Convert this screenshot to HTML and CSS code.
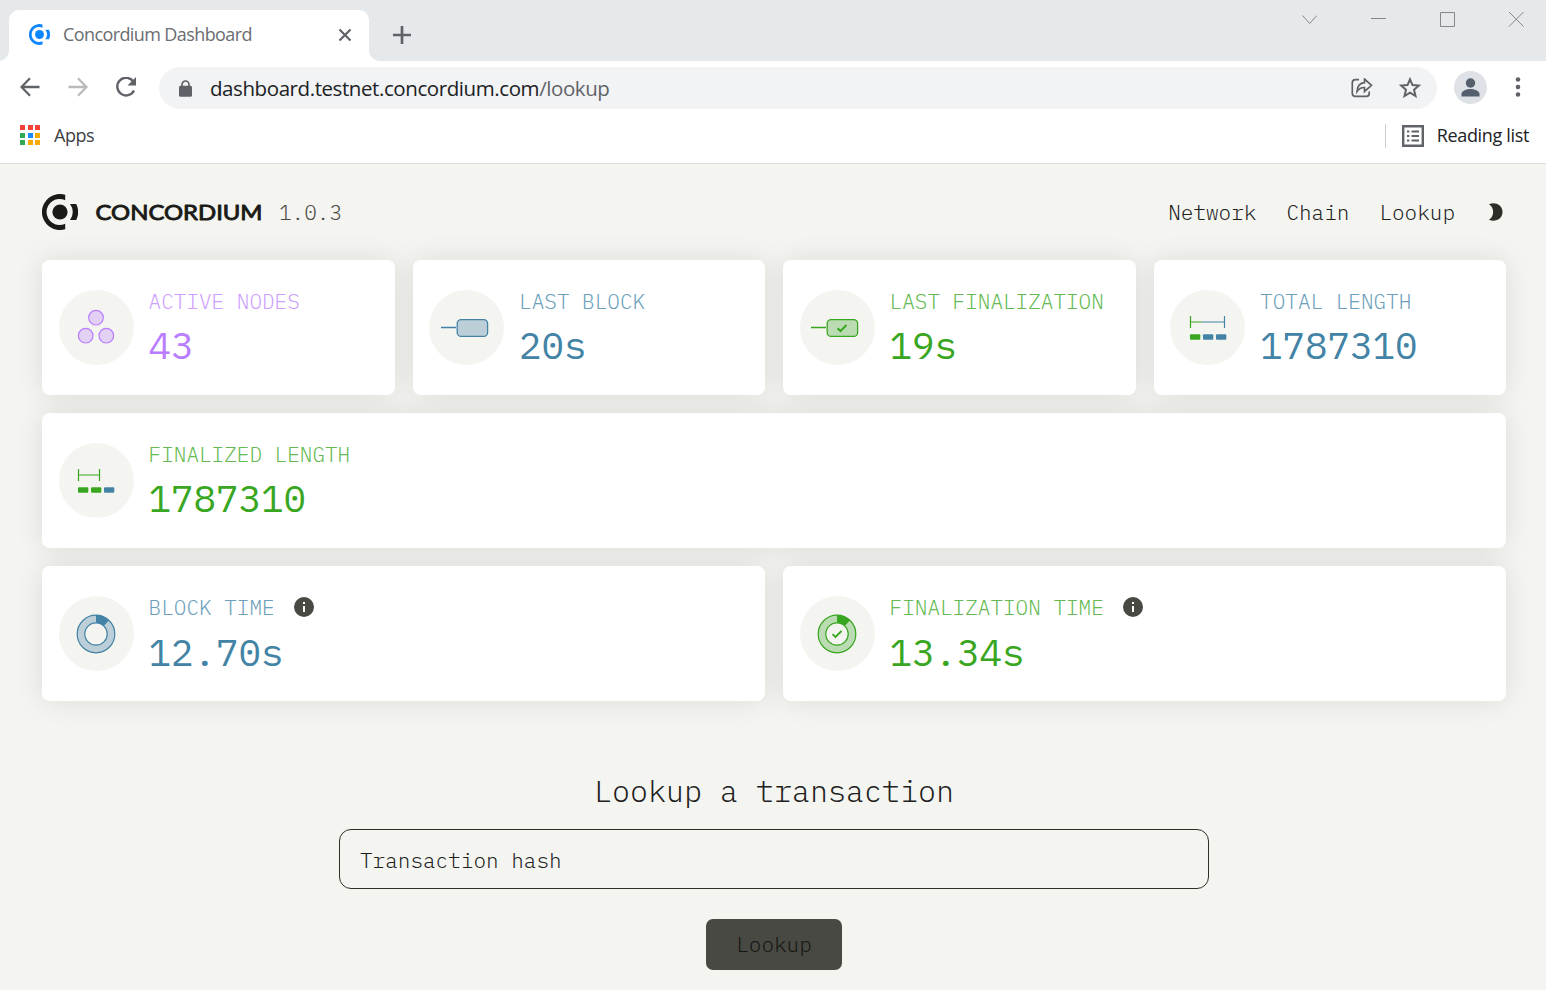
FILE: index.html
```html
<!DOCTYPE html>
<html lang="en">
<head>
<meta charset="utf-8">
<title>Concordium Dashboard</title>
<link rel="stylesheet" href="styles.css">
</head>
<body>
<svg class="defs" width="0" height="0">
  <symbol id="brand" viewBox="0 0 36 36">
    <path d="M23.200 .8A18 18 0 1 0 23.200 35.200V29.700A13 13 0 1 1 23.200 6.300Z" fill="currentColor"/>
    <circle cx="18" cy="18" r="7.600" fill="currentColor"/>
    <path d="M28 10H34.200A18 18 0 0 1 34.200 26H28A13 13 0 0 0 28 10Z" fill="currentColor"/>
  </symbol>
  <symbol id="info" viewBox="0 0 20 20">
    <circle cx="10" cy="10" r="10" fill="#494944"/>
    <path d="M9 5h2v2H9zM9 9h2v6H9z" fill="#fff"/>
  </symbol>
</svg>
<div class="tabs">
  <div class="tab">
    <svg class="favicon" width="21" height="21"><use href="#brand"/></svg>
    <span class="tab-title">Concordium Dashboard</span>
    <svg class="tab-close" width="14" height="14" viewBox="0 0 14 14"><path d="M1.500 1.500l11 11M12.500 1.500l-11 11" stroke="#5f6368" stroke-width="2.200"/></svg>
  </div>
  <svg class="tab-new" width="18" height="18" viewBox="0 0 18 18"><path d="M9 0v18M0 9h18" stroke="#5f6368" stroke-width="2.700"/></svg>
  <div class="window-controls">
    <svg width="16" height="16" viewBox="0 0 16 16"><path d="M1.500 4.500l7.200 8 7.200-8"/></svg>
    <svg width="16" height="16" viewBox="0 0 16 16"><path d="M1 7.500h15"/></svg>
    <svg width="16" height="16" viewBox="0 0 16 16"><path d="M1.500 1.500h14v14h-14z"/></svg>
    <svg width="16" height="16" viewBox="0 0 16 16"><path d="M1 1l14.500 14.500M15.500 1L1 15.500"/></svg>
  </div>
</div>
<div class="toolbar">
  <svg class="tool" width="20" height="20" viewBox="0 0 20 20"><path d="M19.500 10H1.800M10 1.200L1.500 10l8.500 8.800" stroke="#5f6368"/></svg>
  <svg class="tool" width="20" height="20" viewBox="0 0 20 20"><path d="M.5 10h17.700M10 1.200l8.500 8.800-8.500 8.800" stroke="#b8babc"/></svg>
  <svg class="tool reload" width="22" height="20" viewBox="0 0 22 20"><path d="M18.600 5A8.800 8.800 0 1 0 19 13.500" stroke="#5f6368" stroke-width="2.400"/><path d="M21 0v8.500h-8.500z" fill="#5f6368"/></svg>
  <div class="address">
    <svg class="lock" width="13" height="17" viewBox="0 0 13 17"><path d="M3 6V4.500a3.500 3.500 0 0 1 7 0V6" fill="none" stroke="#5f6368" stroke-width="1.700"/><rect y="5.800" width="13" height="11" rx="1.500" fill="#5f6368"/></svg>
    <span class="url">dashboard.testnet.concordium.com<span class="path">/lookup</span></span>
    <svg class="share" width="22" height="20" viewBox="0 0 22 20"><path d="M8 1.600H4.500A3.200 3.200 0 0 0 1.300 4.800v10.400a3.200 3.200 0 0 0 3.200 3.200h10.700a3 3 0 0 0 3-3v-2M6 13.500C6.300 8 9 5 13.500 4.700V1l7 6.300-7 6.200V9.500C10 9.300 8 10.600 6 13.500Z" fill="none" stroke="#5f6368" stroke-width="1.700"/></svg>
    <svg class="star" width="22" height="21" viewBox="0 0 22 21"><path d="M11 2.300l2.500 5.800 6.300.5-4.800 4.200 1.500 6.200-5.500-3.300L5.500 19 7 12.800 2.200 8.600l6.300-.5z" fill="none" stroke="#5f6368" stroke-width="2"/></svg>
  </div>
  <svg class="avatar" width="33" height="33" viewBox="0 0 33 33"><circle cx="16.500" cy="16.500" r="16.500" fill="#dee1e6"/><circle cx="16.500" cy="12" r="4.700" fill="#55606f"/><path d="M7.500 25.500v-2.800c0-3 5.500-4.700 9-4.700s9 1.700 9 4.700v2.800z" fill="#55606f"/></svg>
  <svg class="more" width="6" height="20" viewBox="0 0 6 20"><g fill="#5f6368"><circle cx="3" cy="2.500" r="2.300"/><circle cx="3" cy="10" r="2.300"/><circle cx="3" cy="17.500" r="2.300"/></g></svg>
</div>
<div class="bookmarks">
  <div class="apps-grid"><i class="r"></i><i class="r"></i><i class="r"></i><i class="g"></i><i class="b"></i><i class="y"></i><i class="g"></i><i class="y"></i><i class="y"></i></div>
  <span class="apps">Apps</span>
  <div class="reading">
    <svg width="22" height="22" viewBox="0 0 22 22"><path d="M1.200 1.200h19.600v19.600H1.200z" fill="none" stroke="#5f6368" stroke-width="2.400"/><path d="M5 6.500h2.400M5 11h2.400M5 15.500h2.400M9.500 6.500H17M9.500 11H17M9.500 15.500H17" stroke="#5f6368" stroke-width="2"/></svg>
    <span class="reading-label">Reading list</span>
  </div>
</div>

<main class="page">
  <header class="header">
    <svg class="logo" width="36" height="36"><use href="#brand"/></svg>
    <svg class="wordmark" width="176" height="30" viewBox="0 0 176 30"><text x="4.500" y="22.500" textLength="167" lengthAdjust="spacingAndGlyphs">CONCORDIUM</text></svg>
    <span class="version">1.0.3</span>
    <nav class="nav"><a>Network</a><a>Chain</a><a>Lookup</a>
      <svg width="14" height="18" viewBox="0 0 14 18"><path d="M0 1.200C6-1.500 13.500 2 13.500 9S6 19.500 0 16.800C5.500 13.500 5.500 4.500 0 1.200Z" fill="#2e2e29"/></svg>
    </nav>
  </header>

  <section class="cards">
    <div class="card purple">
      <svg class="icon" viewBox="0 0 75 75"><g fill="#b97dff" fill-opacity=".3" stroke="#b97dff" stroke-width="1.200"><circle cx="37" cy="27.700" r="7.300"/><circle cx="26.700" cy="45.700" r="7.300"/><circle cx="47.300" cy="45.700" r="7.300"/></g></svg>
      <div class="stat"><div class="label">ACTIVE NODES</div><div class="value">43</div></div>
    </div>
    <div class="card blue">
      <svg class="icon" viewBox="0 0 75 75"><path d="M12 37.500h15" stroke="#4383a6" stroke-width="1.300"/><rect x="28.200" y="29.600" width="30.400" height="16.800" rx="4" fill="#bccfd9" stroke="#4383a6" stroke-width="1.300"/></svg>
      <div class="stat"><div class="label">LAST BLOCK</div><div class="value">20s</div></div>
    </div>
    <div class="card green">
      <svg class="icon" viewBox="0 0 75 75"><path d="M11 37.500h15" stroke="#39a621" stroke-width="1.300"/><rect x="27.200" y="29.600" width="30.400" height="16.800" rx="4" fill="#bbdcb2" stroke="#39a621" stroke-width="1.300"/><path d="M37.500 38.200l3 2.800 6-6" fill="none" stroke="#39a621" stroke-width="2"/></svg>
      <div class="stat"><div class="label">LAST FINALIZATION</div><div class="value">19s</div></div>
    </div>
    <div class="card blue">
      <svg class="icon" viewBox="0 0 75 75"><path d="M20.500 26v12M20.500 32H32" stroke="#39a621" stroke-width="1.200"/><path d="M32 32h22M54.500 26v12" stroke="#4383a6" stroke-width="1.200"/><rect x="20" y="44.200" width="10.300" height="5.600" rx="1" fill="#39a621"/><rect x="33" y="44.200" width="10.300" height="5.600" rx="1" fill="#4383a6"/><rect x="46" y="44.200" width="10.300" height="5.600" rx="1" fill="#4383a6"/></svg>
      <div class="stat"><div class="label">TOTAL LENGTH</div><div class="value">1787310</div></div>
    </div>
    <div class="card full green">
      <svg class="icon" viewBox="0 0 75 75"><path d="M19.500 26v12M19.500 32h21M40.500 26v12" stroke="#39a621" stroke-width="1.200"/><rect x="19" y="44.200" width="10.300" height="5.600" rx="1" fill="#39a621"/><rect x="32" y="44.200" width="10.300" height="5.600" rx="1" fill="#39a621"/><rect x="45" y="44.200" width="10.300" height="5.600" rx="1" fill="#4383a6"/></svg>
      <div class="stat"><div class="label">FINALIZED LENGTH</div><div class="value">1787310</div></div>
    </div>
    <div class="card half blue">
      <svg class="icon" viewBox="0 0 75 75"><circle cx="37" cy="38" r="15" fill="none" stroke="#bccfd9" stroke-width="8"/><path d="M37 19a19 19 0 0 1 13 5.200l-5.200 5.800A11.200 11.200 0 0 0 37 26.800z" fill="#4383a6"/><g fill="none" stroke="#4383a6" stroke-width="1.200"><circle cx="37" cy="38" r="18.800"/><circle cx="37" cy="38" r="11.200"/></g></svg>
      <div class="stat"><div class="label">BLOCK TIME<svg class="info" width="20" height="20"><use href="#info"/></svg></div><div class="value">12.70s</div></div>
    </div>
    <div class="card half green">
      <svg class="icon" viewBox="0 0 75 75"><circle cx="37" cy="38" r="15" fill="none" stroke="#bbdcb2" stroke-width="8"/><path d="M37 19a19 19 0 0 1 13 5.200l-5.200 5.800A11.200 11.200 0 0 0 37 26.800z" fill="#39a621"/><g fill="none" stroke="#39a621" stroke-width="1.200"><circle cx="37" cy="38" r="18.800"/><circle cx="37" cy="38" r="11.200"/></g><path d="M32.500 38.200l3 2.800 6-6" fill="none" stroke="#39a621" stroke-width="1.800"/></svg>
      <div class="stat"><div class="label">FINALIZATION TIME<svg class="info" width="20" height="20"><use href="#info"/></svg></div><div class="value">13.34s</div></div>
    </div>
  </section>

  <form class="lookup">
    <h1 class="lookup-title">Lookup a transaction</h1>
    <input class="hash" placeholder="Transaction hash">
    <button class="submit" type="button">Lookup</button>
  </form>
</main>
</body>
</html>
```
FILE: styles.css
```css
* { box-sizing: border-box; }
body {
  margin: 0;
  height: 990px;
  overflow: hidden;
  background: #fff;
  font-family: "Segoe UI", "Open Sans", "Noto Sans", sans-serif;
}
svg { display: block; flex: none; }
.defs { position: absolute; }

.tabs {
  display: flex;
  height: 61px;
  padding: 10px 0 0 9px;
  background: #e6e9ec;
}
.tab {
  position: relative;
  display: flex;
  align-items: center;
  width: 360px;
  height: 51px;
  padding: 0 17px 2px 20px;
  border-radius: 10px 10px 0 0;
  background: #fff;
}
.tab::before, .tab::after {
  content: "";
  position: absolute;
  bottom: 0;
  width: 10px;
  height: 10px;
}
.tab::before { left: -10px; background: radial-gradient(circle at 0 0, transparent 9.500px, #fff 10px); }
.tab::after { right: -10px; background: radial-gradient(circle at 100% 0, transparent 9.500px, #fff 10px); }
.favicon { margin-left: -.5px; color: #0d86ff; }
.tab-title { margin: -2px 0 0 13.500px; font-size: 18px; letter-spacing: -.6px; color: #6a6d71; white-space: nowrap; }
.tab-close { margin-left: auto; }
.tab-new { margin: 16px 0 0 24px; }
.window-controls { display: flex; gap: 53px; margin: 1px 22px 0 auto; }
.window-controls path { fill: none; stroke: #858789; }

.toolbar { display: flex; align-items: center; height: 51px; padding: 0 25px 0 20px; }
.tool { margin: 1px 28px 0 0; fill: none; stroke-width: 2.300; }
.reload { margin-left: -1px; }
.address {
  display: flex;
  align-items: center;
  width: 1278px;
  height: 42px;
  margin: 3px 0 0 -6px;
  padding: 0 16px 0 20px;
  border-radius: 21px;
  background: #f1f3f4;
}
.url { margin-left: 18px; font-size: 20.500px; letter-spacing: -.42px; color: #202124; white-space: nowrap; }
.path { color: #5f6368; }
.share { margin-left: auto; }
.star { margin: -2px 0 0 26px; }
.avatar { margin: 2px 0 0 17px; }
.more { margin: 1px 0 0 28px; }

.bookmarks {
  display: flex;
  align-items: center;
  height: 52px;
  padding: 0 17px 3px 20px;
  border-bottom: 1px solid #d9dbdd;
}
.apps-grid { display: grid; grid-template-columns: repeat(3, 5px); gap: 2.500px; margin-top: -2px; }
.apps-grid i { height: 5px; }
.r { background: #f44336; }
.g { background: #34a853; }
.b { background: #1a8cff; }
.y { background: #fbab00; }
.apps { margin: -2px 0 0 14px; font-size: 18px; letter-spacing: -.45px; color: #3c4043; }
.reading {
  display: flex;
  align-items: center;
  height: 24px;
  margin-left: auto;
  padding-left: 16px;
  border-left: 1px solid #c9ccd0;
}
.reading-label { margin: -2px 0 0 13px; font-size: 18px; letter-spacing: -.34px; color: #202124; white-space: nowrap; }

.page {
  height: 826px;
  padding: 0 40px 0 42px;
  background: #f4f5f0;
  font-family: "IBM Plex Mono", "Liberation Mono", monospace;
  font-weight: 300;
  color: #20201c;
}
.header { display: flex; align-items: center; height: 96px; font-size: 21px; }
.logo { color: #1a1a17; }
.wordmark { margin-left: 13px; }
.wordmark text {
  font: 400 21px Lato, sans-serif;
  fill: #1a1a17;
  stroke: #1a1a17;
  stroke-width: .9px;
  stroke-linejoin: round;
}
.version { margin-left: 12px; color: #4a4a45; }
.nav { display: flex; align-items: center; gap: 30px; margin: 0 3px 0 auto; }
.nav svg { margin-left: 4px; }

.cards {
  display: grid;
  grid-template-columns: repeat(4, 1fr);
  grid-auto-rows: 135px;
  gap: 18px;
  isolation: isolate;
}
.card {
  position: relative;
  display: flex;
  align-items: center;
  padding: 0 16.600px;
  border-radius: 8px;
  background: #fff;
}
.card::before {
  content: "";
  position: absolute;
  inset: 0;
  z-index: -1;
  border-radius: 8px;
  box-shadow: 0 0 28px rgba(0, 0, 0, .1);
}
.full { grid-column: span 4; }
.half { grid-column: span 2; }
.icon { width: 75px; height: 75px; border-radius: 50%; background: #f4f5f0; }
.stat { margin-left: 15px; }
.label { display: flex; align-items: center; height: 28px; font-size: 21px; white-space: nowrap; }
.value { height: 45px; margin-top: 8px; font-size: 37.500px; font-weight: 400; line-height: 45px; }
.half .value { margin-top: 9px; }
.info { margin-left: 19px; }
.purple .label { color: #cd9fff; }
.purple .value { color: #b97dff; }
.blue .label { color: #6d9fbb; }
.blue .value { color: #4383a6; }
.green .label { color: #65ba53; }
.green .value { color: #39a621; }

.lookup { display: flex; flex-direction: column; align-items: center; padding-top: 70px; }
.lookup-title { height: 40px; margin: 0; font-size: 30px; font-weight: inherit; line-height: 40px; }
.hash {
  width: 870px;
  height: 60px;
  margin-top: 18px;
  padding: 1px 20px 0;
  border: 1px solid #2e2e29;
  border-radius: 12px;
  background: transparent;
  font: inherit;
  font-size: 21px;
}
.hash::placeholder { color: #20201c; opacity: 1; }
.submit {
  width: 136px;
  height: 51px;
  margin-top: 30px;
  padding: 0 0 2px;
  border: 0;
  border-radius: 7px;
  background: #494944;
  color: #151513;
  font: inherit;
  font-size: 21px;
}
```
